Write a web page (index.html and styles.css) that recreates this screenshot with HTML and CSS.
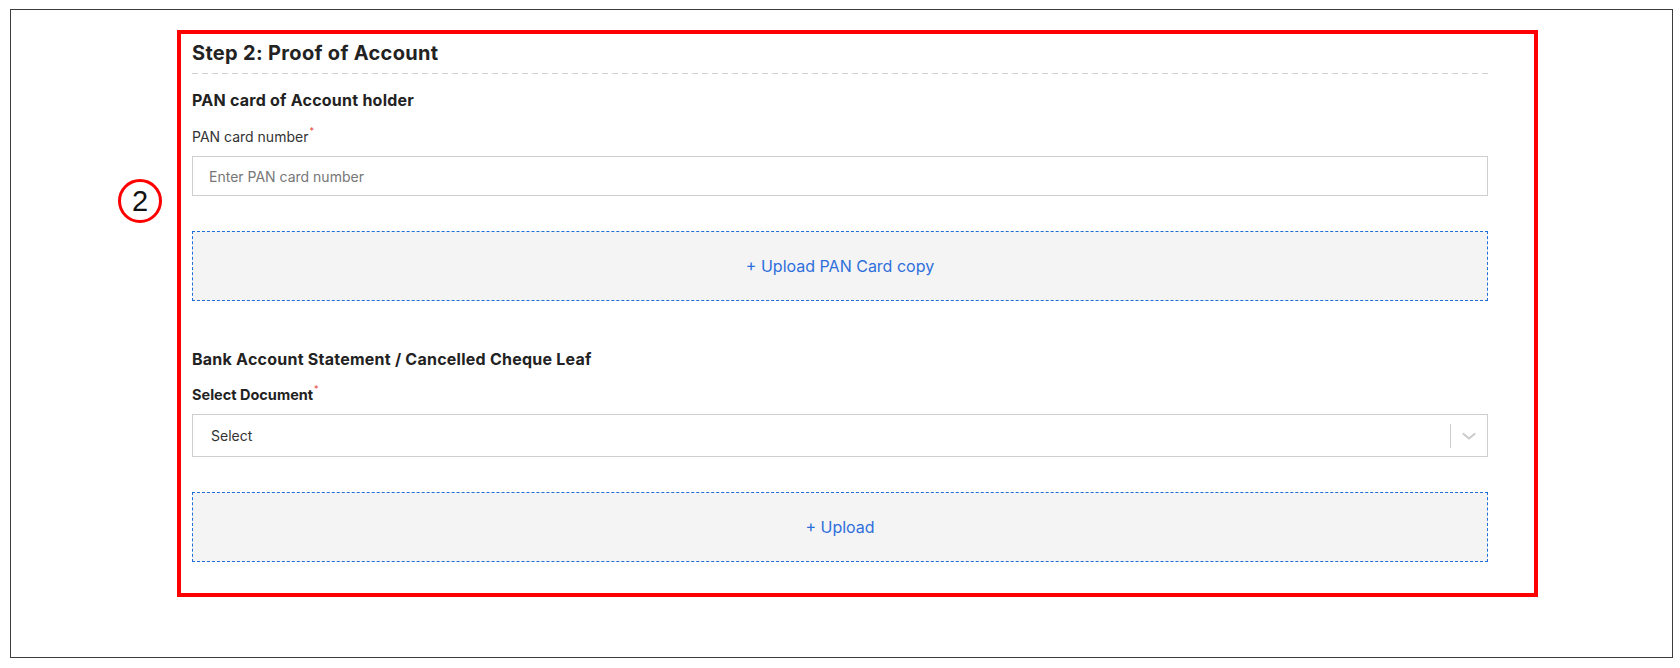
FILE: index.html
```html
<!DOCTYPE html>
<html lang="en">
<head>
<meta charset="utf-8">
<title>Step 2: Proof of Account</title>
<link rel="stylesheet" href="styles.css">
</head>
<body>
<div class="frame">
  <div class="marker"><span class="marker-num">2</span></div>
  <section class="card">
    <h2 class="step-title">Step 2: Proof of Account</h2>

    <h3 class="group-title">PAN card of Account holder</h3>
    <label class="field-label">PAN card number<sup class="req">*</sup></label>
    <input class="text-input" type="text" placeholder="Enter PAN card number">
    <div class="upload">+ Upload PAN Card copy</div>

    <h3 class="group-title group-title-2">Bank Account Statement / Cancelled Cheque Leaf</h3>
    <label class="field-label field-label-bold">Select Document<sup class="req">*</sup></label>
    <div class="select">
      <span class="select-value">Select</span>
      <span class="select-sep"></span>
      <span class="select-ind">
        <svg width="20" height="20" viewBox="0 0 20 20"><path d="M4.5 8 L10 12.5 L15.5 8" fill="none" stroke="#cccccc" stroke-width="2.2" stroke-linecap="round" stroke-linejoin="round"/></svg>
      </span>
    </div>
    <div class="upload">+ Upload</div>
  </section>
</div>
</body>
</html>
```

FILE: styles.css
```css
* { box-sizing: border-box; }
html, body { margin: 0; padding: 0; background: #ffffff; }
body { font-family: Inter, "Noto Sans", Arial, sans-serif; color: #222; }

.frame {
  margin: 9px 0 0 10px;
  width: 1663px;
  height: 649px;
  border: 1px solid #3c3c3c;
  padding: 20px 0 0 107px;
  display: flex;
  align-items: flex-start;
  gap: 15px;
}

.marker {
  width: 44px;
  height: 44px;
  margin-top: 149px;
  border: 3.5px solid #ff0000;
  border-radius: 50%;
  display: flex;
  align-items: center;
  justify-content: center;
  flex-shrink: 0;
}
.marker-num {
  font-family: "Liberation Sans", Arial, sans-serif;
  font-size: 29px;
  line-height: 1;
  color: #111;
  margin-top: 1px;
}

.card {
  width: 1361px;
  border: 4px solid #ff0000;
  padding: 7px 46px 31px 11px;
  display: flex;
  flex-direction: column;
}

.step-title {
  margin: 0;
  font-size: 20px;
  line-height: 24px;
  font-weight: 700;
  letter-spacing: 0.32px;
  color: #222;
  padding-bottom: 9px;
  background-image: linear-gradient(to right, #d2d2d2 6px, transparent 6px);
  background-size: 10px 1px;
  background-repeat: repeat-x;
  background-position: left bottom;
}

.group-title {
  margin: 16px 0 0;
  font-size: 16px;
  line-height: 20px;
  font-weight: 700;
  letter-spacing: 0.24px;
  color: #222;
}
.group-title-2 { margin-top: 48px; }

.field-label {
  display: block;
  margin-top: 18px;
  font-size: 14px;
  line-height: 18px;
  font-weight: 400;
  color: #333;
}
.field-label-bold {
  margin-top: 17px;
  font-size: 14.5px;
  font-weight: 700;
  letter-spacing: 0;
  color: #222;
}
.req {
  color: #e53935;
  font-size: 9px;
  font-weight: 400;
  vertical-align: top;
  line-height: 1;
  margin-left: 1px;
  position: relative;
  top: -2px;
}

.text-input {
  display: block;
  margin-top: 10px;
  width: 100%;
  height: 40px;
  border: 1px solid #cfcfcf;
  border-radius: 0;
  padding: 0 16px;
  font-family: inherit;
  font-size: 14px;
  color: #333;
  background: #fff;
  outline: none;
}
.text-input::placeholder { color: #777; }

.upload {
  margin-top: 35px;
  height: 70px;
  border: 1px dashed #1f6fd8;
  background: #f4f4f4;
  display: flex;
  align-items: center;
  justify-content: center;
  font-size: 16px;
  color: #2e6fdc;
}

.select {
  margin-top: 10px;
  height: 43px;
  border: 1px solid #cfcfcf;
  background: #fff;
  display: flex;
  align-items: center;
}
.select-value {
  flex: 1;
  padding-left: 18px;
  font-size: 14px;
  color: #333;
}
.select-sep {
  width: 1px;
  height: 24px;
  background: #cccccc;
}
.select-ind {
  display: flex;
  padding: 0 8px;
}
.select-ind svg { display: block; }
```
